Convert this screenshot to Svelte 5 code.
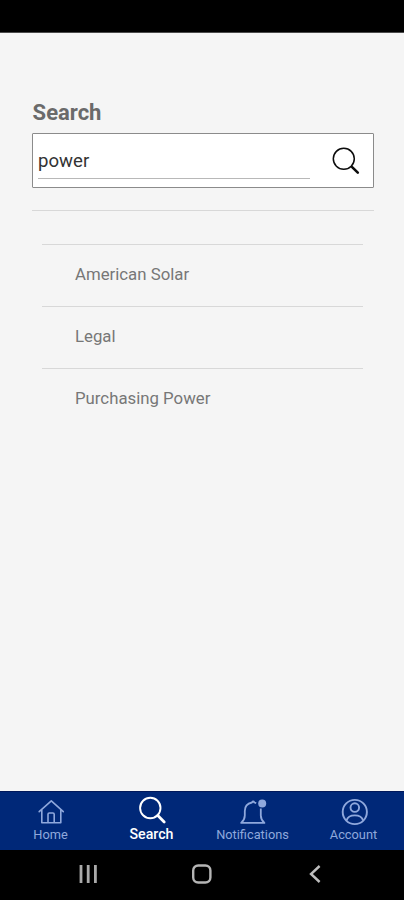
<script>
  let query = $state('power');
  let active = $state('search');

  const results = ['American Solar', 'Legal', 'Purchasing Power'];

  const tabs = [
    { id: 'home', label: 'Home' },
    { id: 'search', label: 'Search' },
    { id: 'notifications', label: 'Notifications' },
    { id: 'account', label: 'Account' },
  ];
</script>

<div class="phone">
  <div class="status-bar"></div>

  <main>
    <h1>Search</h1>
    <form class="search-box" onsubmit={(e) => e.preventDefault()}>
      <input type="text" aria-label="Search" bind:value={query} />
      <button type="submit" aria-label="Submit search">
        <svg width="30" height="30" viewBox="0 0 30 30" fill="none" stroke="#0c0c0c">
          <circle cx="12.8" cy="12.8" r="10.5" stroke-width="1.5" />
          <path d="M20.4 20.4l1.8 1.8" stroke-width="1.6" />
          <path d="M21.4 21.4l5.4 5.2" stroke-width="2.6" stroke-linecap="round" />
        </svg>
      </button>
    </form>

    <ul class="results">
      {#each results as result (result)}
        <li>{result}</li>
      {/each}
    </ul>
  </main>

  <nav class="tabs">
    {#each tabs as tab (tab.id)}
      <button class="tab" class:active={active === tab.id} onclick={() => (active = tab.id)}>
        <svg width="30" height="30" viewBox="0 0 30 30" fill="none" stroke="currentColor">
          {#if tab.id === 'home'}
            <path d="M3.2 15.7L15.3 4.8l12 10.9M5.8 13.4v13.3h19V13.4" stroke-width="1.6" stroke-linejoin="round" stroke-linecap="round" />
            <path d="M12 26.5v-8.2q0-1.3 1.3-1.3h3.6q1.3 0 1.3 1.3v8.2" stroke-width="1.6" />
          {:else if tab.id === 'search'}
            <circle cx="13.3" cy="12" r="10.2" stroke-width="1.9" />
            <path d="M20.8 19.5l6.4 6.4" stroke-width="2.8" stroke-linecap="round" />
          {:else if tab.id === 'notifications'}
            <path d="M18.200 7.200l-1.800-.7q-1.200-2-2.500 0C9.500 7.400 6.800 10.500 6.800 15v4.500q0 4-3.600 7.400h23.200Q22.800 23.500 22.800 19.500V12.500" stroke-width="1.800" stroke-linejoin="round" />
            <circle cx="24.200" cy="7.500" r="4" fill="currentColor" stroke="none" />
          {:else}
            <circle cx="15.800" cy="16" r="12.100" stroke-width="1.900" />
            <circle cx="15.800" cy="11.600" r="4.300" stroke-width="1.900" />
            <path d="M7.500 24.400q1.500-5 8.300-5t8.300 5" stroke-width="1.900" />
          {/if}
        </svg>
        <span>{tab.label}</span>
      </button>
    {/each}
  </nav>

  <div class="system-bar">
    <svg width="20" height="20" viewBox="0 0 20 20" stroke="#aaa" stroke-width="2.800">
      <path d="M2 1v18M9.200 1v18M16.400 1v18" />
    </svg>
    <svg width="20" height="20" viewBox="0 0 20 20" fill="none" stroke="#b5b5b5" stroke-width="2.400">
      <rect x="1.200" y="1.500" width="17.200" height="17" rx="5" />
    </svg>
    <svg width="20" height="20" viewBox="0 0 20 20" fill="none" stroke="#bdbdbd" stroke-width="2.400">
      <path d="M14.600 2L6 10l8.600 8" />
    </svg>
  </div>
</div>

<style>
  :global(body) {
    background: #f5f5f5;
  }
  .phone {
    display: flex;
    flex-direction: column;
    height: 900px;
    background: #f5f5f5;
    font-family: Roboto, sans-serif;
    color: #777;
  }
  .status-bar {
    flex: none;
    box-sizing: border-box;
    height: 33px;
    background: #000;
    border-bottom: 1px solid #4c4c4c;
  }
  main {
    flex: 1;
    padding: 67px 30px 0 32px;
  }
  h1 {
    margin: 0;
    padding-left: 0.6px;
    font-size: 22px;
    font-weight: 700;
    line-height: 26px;
    color: #6a6a6a;
  }
  .search-box {
    box-sizing: border-box;
    display: flex;
    height: 55px;
    margin-top: 7px;
    padding: 4px 12px 7px 5px;
    background: #fff;
    border: 1px solid #8b8b8b;
    border-radius: 1px;
  }
  .search-box input {
    box-sizing: border-box;
    width: 272px;
    height: 41px;
    padding: 5px 0 0;
    border: 0;
    border-bottom: 1px solid #b8b8b8;
    background: none;
    outline: none;
    font: 18.6px Roboto, sans-serif;
    color: #333;
  }
  button {
    padding: 0;
    border: 0;
    background: none;
    font-family: inherit;
  }
  .search-box button {
    display: flex;
    margin-left: auto;
    padding-top: 8px;
  }
  .results {
    margin: 22px 0 0;
    padding: 33px 11px 0 10px;
    border-top: 1px solid #d8d8d8;
    list-style: none;
  }
  .results li {
    box-sizing: border-box;
    height: 62.1px;
    padding: 19px 33px 0;
    border-top: 1px solid #d8d8d8;
    font-size: 16.8px;
    line-height: 21px;
  }
  .tabs {
    flex: none;
    box-sizing: border-box;
    display: flex;
    height: 59px;
    background: #002878;
    border-top: 1px solid #00185a;
  }
  .tab {
    flex: 1;
    display: flex;
    flex-direction: column;
    align-items: center;
    padding-top: 4px;
    color: #8fa8dc;
  }
  .tab span {
    margin-top: 1px;
    font-size: 12.8px;
    line-height: 16px;
  }
  .tab.active {
    color: #fff;
  }
  .tab.active span {
    margin-top: 0;
    font-size: 14.2px;
    font-weight: 500;
  }
  .system-bar {
    flex: none;
    box-sizing: border-box;
    display: flex;
    justify-content: space-between;
    height: 50px;
    padding: 14px 79px 0;
    background: #000;
  }
</style>
